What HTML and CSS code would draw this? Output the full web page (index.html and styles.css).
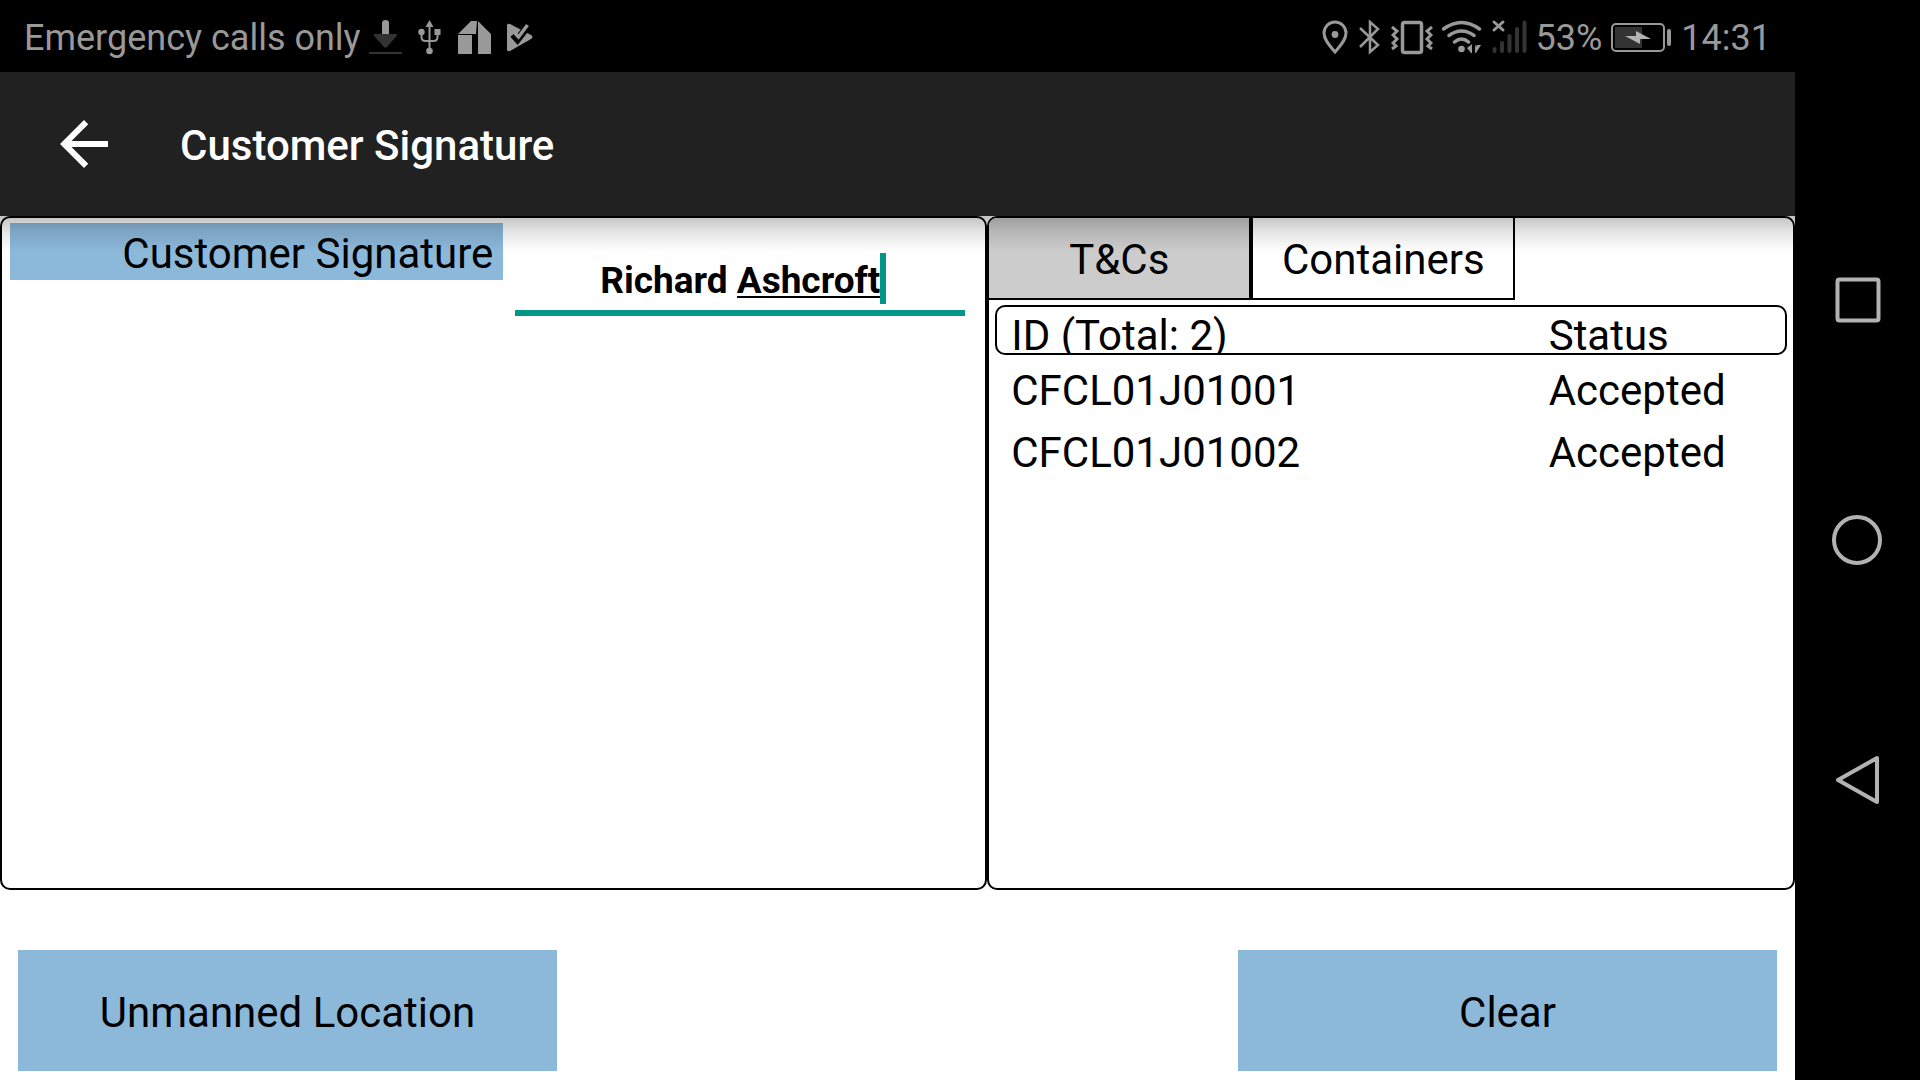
FILE: index.html
```html
<!DOCTYPE html>
<html lang="en">

  <head>
    <meta charset="utf-8">
    <meta name="viewport" content="width=device-width, initial-scale=1">
    <title>Customer Signature</title>
    <link rel="stylesheet" href="styles.css">
  </head>

  <body>
    <div class="screen">
      <div class="status_bar">
        <span>Emergency calls only</span>
        <div class="notifications">
          <!-- download -->
          <svg width="33" height="36" viewBox="0 0 33 36">
            <path class="dim" d="M6 15h21q2 0 .5 2L18 28q-1.500 1.500-3 0L5 17q-1-2 1-2zM0 33h33v2H0z" />
            <path d="M13 15V4q0-3 3.500-3T20 4v11z" />
          </svg>
          <!-- usb -->
          <svg width="24" height="36" viewBox="0 0 24 36">
            <path class="line" d="M11.500 6v25M3.500 12v6q0 4 4 4h8q4 0 4-4v-6" stroke-width="2" />
            <path d="M11.500 1l4 7h-8zM16.500 10h6v6h-6z" />
            <circle cx="3.500" cy="13" r="3.200" />
            <circle cx="11.500" cy="32" r="3.300" />
          </svg>
          <!-- house -->
          <svg width="33" height="36" viewBox="0 0 33 36">
            <path d="M0 15L13 2h6l-1 13zM20 2l13 13v20H20zM0 16h14v19H0z" />
          </svg>
          <!-- play check -->
          <svg width="27" height="36" viewBox="0 0 27 36">
            <path d="M3 5l21 11q3 2 0 4L3 32q-2 1-3-1V6q1-2 3-1z" />
            <path class="line gap" d="M6 15.500l4.500 5L21 7" stroke-width="7" />
            <path class="line" d="M7 13l4.500 5L20.500 6" stroke-width="3.500" />
          </svg>
        </div>
        <div class="indicators">
          <!-- location -->
          <svg width="28" height="36" viewBox="0 0 28 36">
            <path class="line" d="M13 33C8 27 2 21 2 14a11 11 0 0 1 22 0C24 21 18 27 13 33z" stroke-width="3" />
            <circle cx="13" cy="15.500" r="3.400" />
          </svg>
          <!-- bluetooth -->
          <svg width="23" height="36" viewBox="0 0 23 36">
            <path class="line" d="M1 9l18 17-8 7V3l8 7L1 28" stroke-width="2.500" />
          </svg>
          <!-- vibrate -->
          <svg width="42" height="36" viewBox="0 0 42 36">
            <rect class="line" x="11.500" y="3.500" width="19" height="30" rx="2" stroke-width="3.500" />
            <path class="line" d="M1 8l5 4-4 4 4 4-4 4 3 3-4 3M41 8l-5 4 4 4-4 4 4 4-3 3 4 3" stroke-width="3" />
          </svg>
          <!-- wifi -->
          <svg width="40" height="36" viewBox="0 0 40 36">
            <path class="line round" d="M1.500 10q18-13 36 0M7 16.500q12.500-9 25 0M12.500 23q7-6 14 0" stroke-width="3.500" />
            <circle cx="19.500" cy="30" r="3.300" />
            <path d="M30 25v9h-1l-4-5zM33 25v9h1l5-8h-4l-1 2z" />
          </svg>
          <!-- no signal -->
          <svg width="36" height="36" viewBox="0 0 36 36">
            <path class="line dim_line round" d="M3.500 30v2M11 24v8M18.500 17v15M26 10v22M33.500 3.500v28.500" stroke-width="4" />
            <path class="line round" d="M3 3l9 8M12 3l-9 8" stroke-width="3" />
          </svg>
          <span>53%</span>
          <!-- battery -->
          <svg width="61" height="36" viewBox="0 0 61 36">
            <rect class="line" x="1" y="5" width="52" height="27" rx="4" stroke-width="2" />
            <path class="dim" d="M4 8h27v21H4z" />
            <path class="bolt" d="M14 17h11v-5l15 8H29v5z" />
            <rect x="56" y="10" width="4" height="17" rx="2" />
          </svg>
          <span>14:31</span>
        </div>
      </div>

      <header class="app_bar">
        <button class="back" type="button" aria-label="Back">
          <svg width="72" height="72" viewBox="0 0 24 24">
            <path d="M20 11H7.830l5.590-5.590L12 4l-8 8 8 8 1.410-1.410L7.830 13H20z" />
          </svg>
        </button>
        <h1>Customer Signature</h1>
      </header>

      <main class="panels">
        <section class="panel signature">
          <label for="signee">Customer Signature</label>
          <div class="field">
            <input id="signee" type="text" value="Richard Ashcroft" spellcheck="false" autocomplete="off">
            <span class="spelling"></span>
            <span class="caret"></span>
          </div>
        </section>

        <section class="panel details">
          <div class="tabs">
            <button class="tab selected" type="button">T&amp;Cs</button>
            <button class="tab" type="button">Containers</button>
          </div>
          <table class="containers">
            <thead>
              <tr>
                <th>ID (Total: 2)</th>
                <th class="status">Status</th>
              </tr>
            </thead>
            <tbody>
              <tr>
                <td>CFCL01J01001</td>
                <td class="status">Accepted</td>
              </tr>
              <tr>
                <td>CFCL01J01002</td>
                <td class="status">Accepted</td>
              </tr>
            </tbody>
          </table>
        </section>
      </main>

      <footer class="actions">
        <button type="button">Unmanned Location</button>
        <button type="button">Clear</button>
      </footer>
    </div>

    <nav class="nav_bar">
      <button type="button" aria-label="Recent apps">
        <svg width="54" height="54" viewBox="0 0 54 54">
          <rect x="6.500" y="6.500" width="41" height="41" rx="2" />
        </svg>
      </button>
      <button type="button" aria-label="Home">
        <svg width="54" height="54" viewBox="0 0 54 54">
          <circle cx="26" cy="27" r="23" />
        </svg>
      </button>
      <button type="button" aria-label="Back">
        <svg width="54" height="54" viewBox="0 0 54 54">
          <path d="M7 27L46 5v44z" />
        </svg>
      </button>
    </nav>
  </body>

</html>
```
FILE: styles.css
```css
* {
  box-sizing: border-box;
}

body {
  display: flex;
  height: 100vh;
  margin: 0;
  background: #000;
  color: #000;
  font-family: Roboto, "Liberation Sans", sans-serif;
  font-size: 42px;
  line-height: 49px;
}

button,
input {
  margin: 0;
  padding: 0;
  border: 0;
  border-radius: 0;
  background: none;
  color: inherit;
  font: inherit;
}

svg {
  display: block;
  flex: none;
}

.screen {
  display: flex;
  flex: 1;
  flex-direction: column;
  min-width: 0;
  background: #fff;
}

/* system status bar */

.status_bar {
  display: flex;
  align-items: center;
  height: 72px;
  padding: 2px 24px 0;
  background: #000;
  color: #999;
  font-size: 36px;
  white-space: nowrap;
}

.status_bar span {
  padding-top: 2px;
}

.status_bar svg {
  fill: #999;
}

.status_bar .line {
  fill: none;
  stroke: #999;
}

.status_bar .round {
  stroke-linecap: round;
}

.status_bar .gap {
  stroke: #000;
}

.status_bar .dim {
  fill: #333;
}

.status_bar .dim_line {
  stroke: #333;
}

.status_bar .bolt {
  fill: #b2b2b2;
}

.notifications {
  display: flex;
  gap: 16px;
  margin-left: 8px;
}

.indicators {
  display: flex;
  align-items: center;
  gap: 9px;
  margin-left: auto;
}

/* title bar */

.app_bar {
  position: relative;
  display: flex;
  align-items: center;
  height: 144px;
  padding-left: 48px;
  background: #212121;
  color: #fff;
}

.app_bar::after {
  content: "";
  position: absolute;
  z-index: 1;
  top: 100%;
  left: 0;
  right: 0;
  height: 36px;
  background: linear-gradient(rgba(0, 0, 0, 0.24), rgba(0, 0, 0, 0.1) 45%, rgba(0, 0, 0, 0));
  pointer-events: none;
}

.back {
  margin-right: 60px;
  fill: #fff;
}

.app_bar h1 {
  margin: 0;
  padding-top: 2px;
  font-size: 42px;
  font-weight: 500;
}

/* panels */

.panels {
  display: flex;
  flex: 1;
  min-height: 0;
}

.panel {
  border: 2px solid #000;
  border-radius: 10px;
  overflow: hidden;
}

.signature {
  display: flex;
  align-items: flex-start;
  width: 55%;
  padding: 5px 8px;
}

.signature label {
  width: 51%;
  padding: 6px 10px 2px;
  background: #8cb8da;
  text-align: right;
}

.field {
  position: relative;
  flex: 1;
  margin: 0 12px;
}

.field input {
  width: 100%;
  height: 93px;
  padding-top: 28px;
  border-bottom: 6px solid #009688;
  outline: none;
  font-size: 37px;
  font-weight: 700;
  text-align: center;
}

.spelling {
  position: absolute;
  top: 73px;
  left: calc(50% - 3px);
  width: 144px;
  height: 2px;
  background: #000;
}

.caret {
  position: absolute;
  top: 30px;
  left: calc(50% + 140px);
  width: 6px;
  height: 51px;
  background: #009688;
}

.details {
  width: 45%;
}

.tabs {
  display: flex;
}

.tab {
  width: 264px;
  height: 82px;
  padding-top: 3px;
  border: solid #000;
  border-width: 0 2px 2px;
}

.tab:first-child {
  width: 262px;
  border-left: 0;
}

.tab.selected {
  background: #ccc;
}

.containers,
.containers thead,
.containers tbody {
  display: block;
}

.containers {
  padding: 5px 6px;
}

.containers tr {
  display: flex;
}

.containers th,
.containers td {
  flex: 1;
  padding: 0;
  font-weight: 400;
  text-align: left;
}

.containers .status {
  flex: 0 0 30%;
}

.containers thead tr {
  height: 50px;
  margin-bottom: 4px;
  padding: 4px 6px 0 14px;
  border: 2px solid #000;
  border-radius: 10px;
  overflow: hidden;
}

.containers tbody tr {
  align-items: center;
  height: 62px;
  padding: 0 8px 0 16px;
}

/* bottom buttons */

.actions {
  display: flex;
  justify-content: space-between;
  padding: 60px 18px 9px;
}

.actions button {
  width: 539px;
  height: 121px;
  padding-top: 4px;
  background: #8cb8da;
}

/* system navigation */

.nav_bar {
  display: flex;
  flex-direction: column;
  justify-content: center;
  width: 125px;
}

.nav_bar button {
  display: flex;
  align-items: center;
  justify-content: center;
  height: 240px;
}

.nav_bar svg {
  fill: none;
  stroke: #b2b2b2;
  stroke-width: 4px;
  stroke-linejoin: round;
}
```
